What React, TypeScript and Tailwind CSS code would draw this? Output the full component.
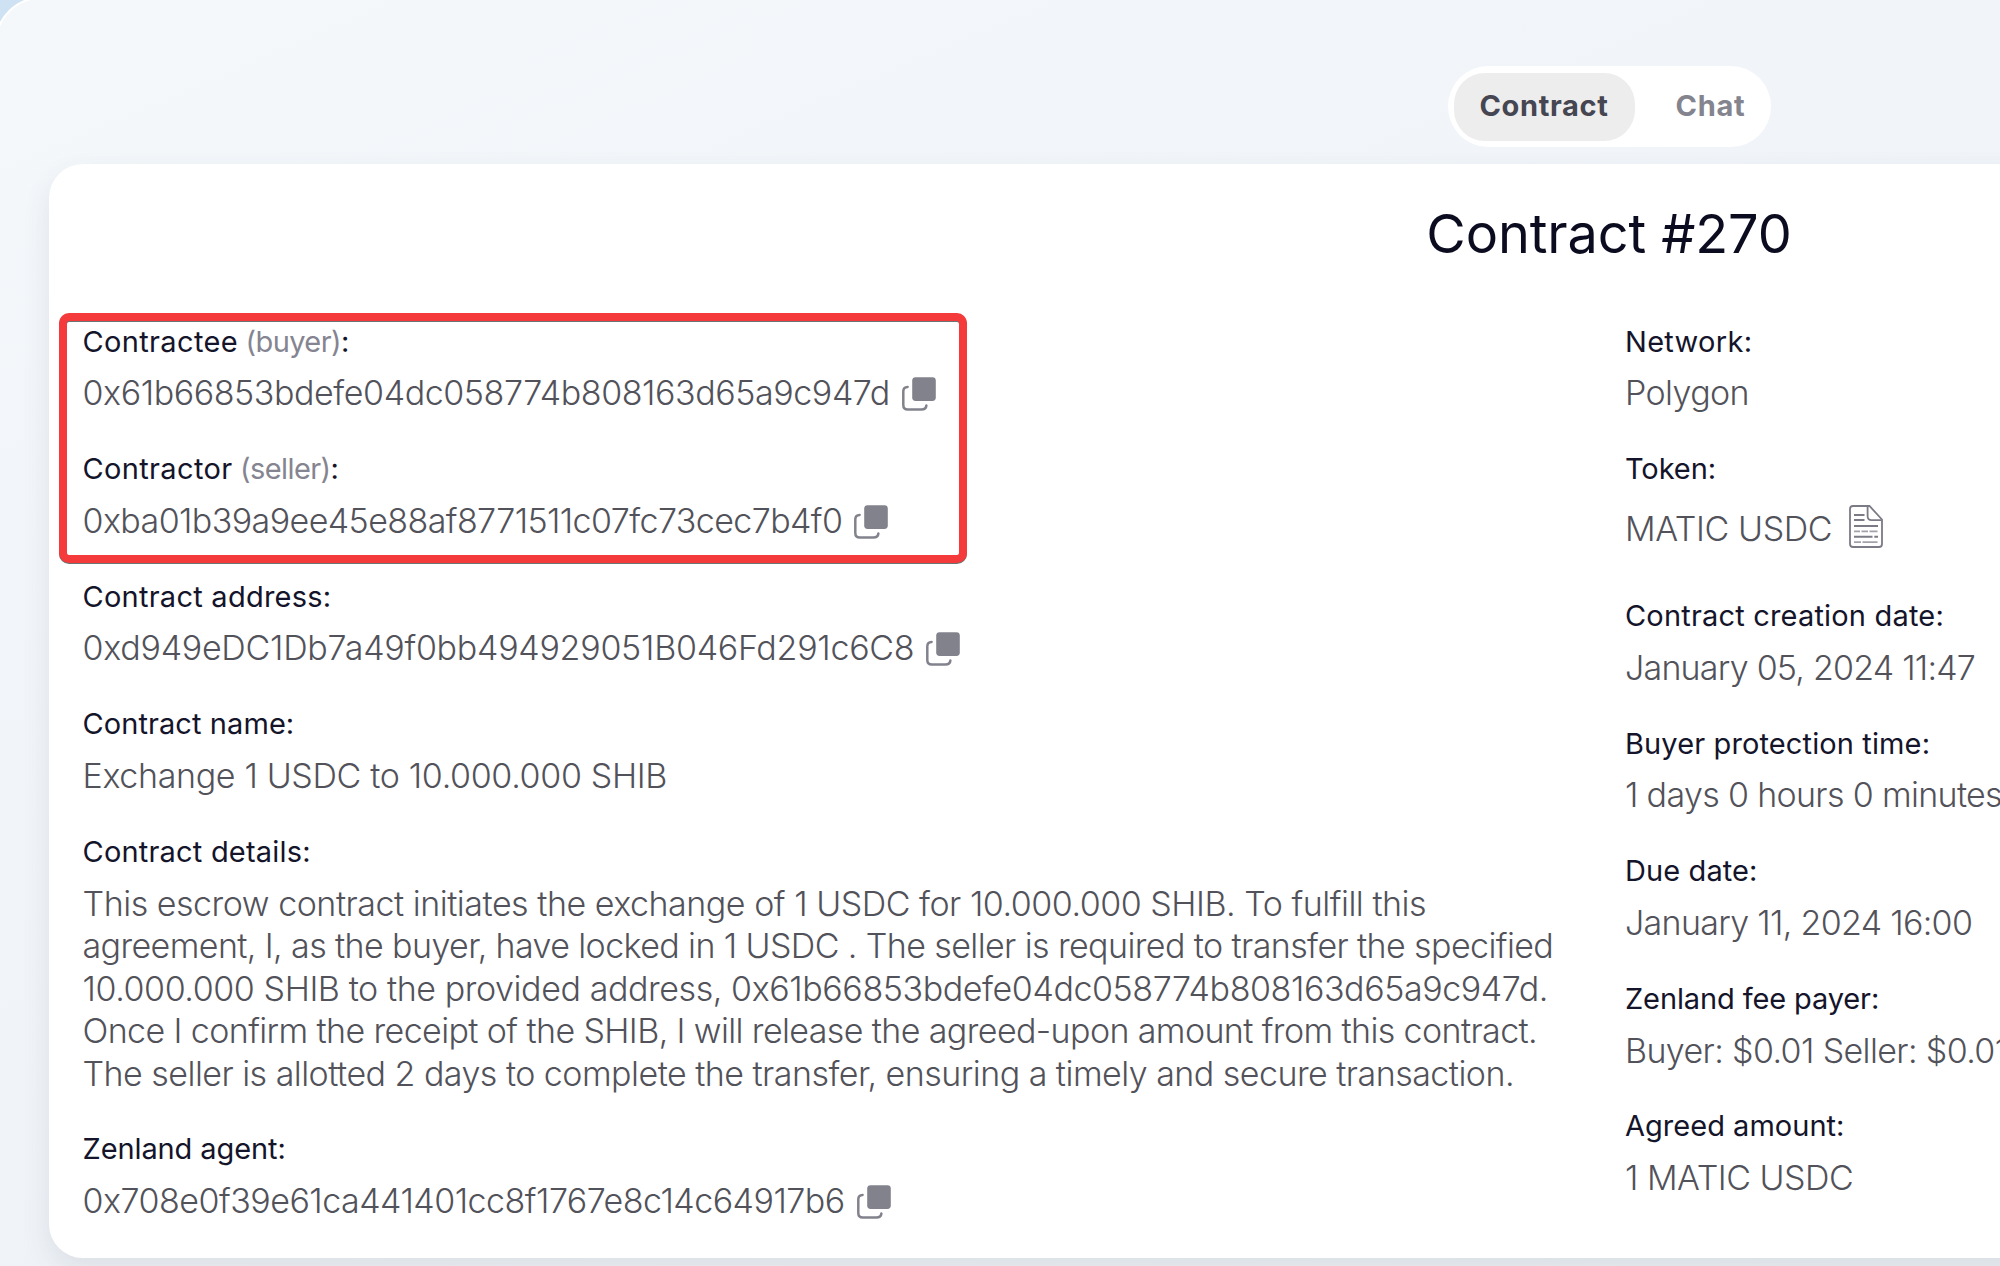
import type { ReactNode } from 'react';

function CopyIcon() {
  return (
    <svg width="34" height="34" viewBox="0 0 34 34" fill="none" className="mt-[1.5px] shrink-0">
      <rect x="10.2" y="0.2" width="23.6" height="23.8" rx="3.4" fill="#82828d" />
      <path
        d="M5.6 9.9C2.8 10 1.3 11.4 1.3 14.4V28C1.3 31 2.8 32.5 5.8 32.5H19.4C22.6 32.5 24.2 31.2 24.4 28.4"
        stroke="#82828d"
        strokeWidth="2.5"
        strokeLinecap="round"
      />
    </svg>
  );
}

function DocumentIcon() {
  return (
    <svg width="34" height="43" viewBox="0 0 34 43" fill="none" stroke="#7b7b86" className="shrink-0">
      <path d="M4 1H20.5L33 14.5V39Q33 42 30 42H4Q1 42 1 39V4Q1 1 4 1Z" strokeWidth="1.8" />
      <path d="M18.6 1.5V11Q18.6 15.2 22.6 15.2H32.5" strokeWidth="1.8" />
      <path d="M5 10H15.5M5 15H15.5" strokeWidth="1.8" />
      <path d="M5 21H29" strokeWidth="2" />
      <path d="M5 26.3H11M12.5 26.3H19M20.5 26.3H28.5" strokeWidth="1.8" opacity="0.7" />
      <path d="M5 31.7H23.5M25.3 31.7H29" strokeWidth="2" />
      <path d="M5 37.2H12M13.5 37.2H28.5" strokeWidth="1.8" opacity="0.7" />
    </svg>
  );
}

function Field({ label, track, children }: { label: ReactNode; track: string; children: ReactNode }) {
  return (
    <div className="mb-[33.4px] whitespace-nowrap">
      <div className={`mb-[9.7px] text-[29px] leading-[42px] text-[#14142a] ${track}`}>{label}</div>
      <div className="text-[34px] leading-[42.5px] font-light text-[#52525a]">{children}</div>
    </div>
  );
}

function Address({ value, track }: { value: string; track: string }) {
  return (
    <div className="flex h-[42.5px] items-center gap-[12px]">
      <span className={track}>{value}</span>
      <CopyIcon />
    </div>
  );
}

export default function App() {
  return (
    <div className="h-[1266px] w-[2000px] overflow-hidden bg-[#cfe2f3] font-['Inter',sans-serif]">
      <div className="-mt-[3px] -ml-[5px] h-[1400px] w-[3300px] rounded-[46px] border-2 border-white bg-linear-to-br from-[#f4f8fb] to-[#eaeef4] pt-[67px] pl-[52px]">
        <div className="w-[3120px]">
          <div className="mx-auto flex h-[81px] w-[323px] rounded-full bg-white p-[6px] pt-[7px] text-[29px] font-bold">
            <div className="flex h-[68px] w-[181px] items-center justify-center rounded-[31px] bg-[#ededed] pb-[3px] tracking-[0.65px] text-[#464652]">
              Contract
            </div>
            <div className="flex h-[68px] flex-1 items-center justify-center pb-[3px] pl-[22px] tracking-[0.7px] text-[#84848f]">
              Chat
            </div>
          </div>

          <div className="mt-[17px] h-[1094px] rounded-[34px] bg-white px-[33.5px] pt-[38px] shadow-[0_12px_28px_rgba(60,75,90,0.11)]">
            <h1 className="text-center text-[54px] leading-[64px] tracking-[-0.1px] text-[#0c0c20]">Contract #270</h1>
            <div className="relative mt-[54.5px] flex">
              <div className="w-[1542.5px]">
                <Field
                  track=""
                  label={
                    <>
                      <span className="tracking-[0.35px]">Contractee</span>
                      <span className="tracking-[-0.6px] text-[#858591]"> (buyer)</span>:
                    </>
                  }
                >
                  <Address value="0x61b66853bdefe04dc058774b808163d65a9c947d" track="tracking-[-0.43px]" />
                </Field>
                <Field
                  track=""
                  label={
                    <>
                      <span className="tracking-[0.35px]">Contractor</span>
                      <span className="tracking-[-0.6px] text-[#858591]"> (seller)</span>:
                    </>
                  }
                >
                  <Address value="0xba01b39a9ee45e88af8771511c07fc73cec7b4f0" track="tracking-[-0.59px]" />
                </Field>
                <Field label="Contract address:" track="tracking-[0.25px]">
                  <Address value="0xd949eDC1Db7a49f0bb494929051B046Fd291c6C8" track="tracking-[-0.27px]" />
                </Field>
                <Field label="Contract name:" track="tracking-[0.08px]">
                  <span className="tracking-[-0.34px]">Exchange 1 USDC to 10.000.000 SHIB</span>
                </Field>
                <Field label="Contract details:" track="tracking-[0.2px]">
                  <p className="tracking-[-0.48px]">
                    This escrow contract initiates the exchange of 1 USDC for 10.000.000 SHIB. To fulfill this
                  </p>
                  <p className="tracking-[-0.6px]">
                    agreement, I, as the buyer, have locked in 1 USDC . The seller is required to transfer the specified
                  </p>
                  <p className="tracking-[-0.42px]">
                    10.000.000 SHIB to the provided address, 0x61b66853bdefe04dc058774b808163d65a9c947d.
                  </p>
                  <p className="tracking-[-0.61px]">
                    Once I confirm the receipt of the SHIB, I will release the agreed-upon amount from this contract.
                  </p>
                  <p className="tracking-[-0.53px]">
                    The seller is allotted 2 days to complete the transfer, ensuring a timely and secure transaction.
                  </p>
                </Field>
                <Field label="Zenland agent:" track="tracking-[-0.1px]">
                  <Address value="0x708e0f39e61ca441401cc8f1767e8c14c64917b6" track="tracking-[-0.51px]" />
                </Field>
              </div>

              <div className="flex-1">
                <Field label="Network:" track="tracking-[0.3px]">
                  <span className="tracking-[-0.609px]">Polygon</span>
                </Field>
                <Field label="Token:" track="tracking-[-0.09px]">
                  <div className="flex h-[62px] items-start gap-[17px]">
                    <span className="leading-[58.5px] tracking-[-0.4px]">MATIC USDC</span>
                    <div className="pt-[5px]">
                      <DocumentIcon />
                    </div>
                  </div>
                </Field>
                <Field label="Contract creation date:" track="tracking-[0.18px]">
                  <span className="tracking-[-0.78px]">January 05, 2024 11:47</span>
                </Field>
                <Field label="Buyer protection time:" track="tracking-[0.12px]">
                  <span className="tracking-[-0.665px]">1 days 0 hours 0 minutes</span>
                </Field>
                <Field label="Due date:" track="tracking-[0.1px]">
                  <span className="tracking-[-0.69px]">January 11, 2024 16:00</span>
                </Field>
                <Field label="Zenland fee payer:" track="tracking-[-0.12px]">
                  <span className="tracking-[-0.62px]">Buyer: $0.01 Seller: $0.01</span>
                </Field>
                <Field label="Agreed amount:" track="tracking-[0.02px]">
                  <span className="tracking-[-0.48px]">1 MATIC USDC</span>
                </Field>
              </div>

              {/* highlight around both parties */}
              <div className="absolute -top-[7.5px] -left-[24px] h-[250px] w-[908px] rounded-[10px] border-[8.5px] border-[#f43a3a] drop-shadow-[0_1.5px_0.5px_rgba(70,80,80,0.8)]" />
            </div>
          </div>
        </div>
      </div>
    </div>
  );
}
